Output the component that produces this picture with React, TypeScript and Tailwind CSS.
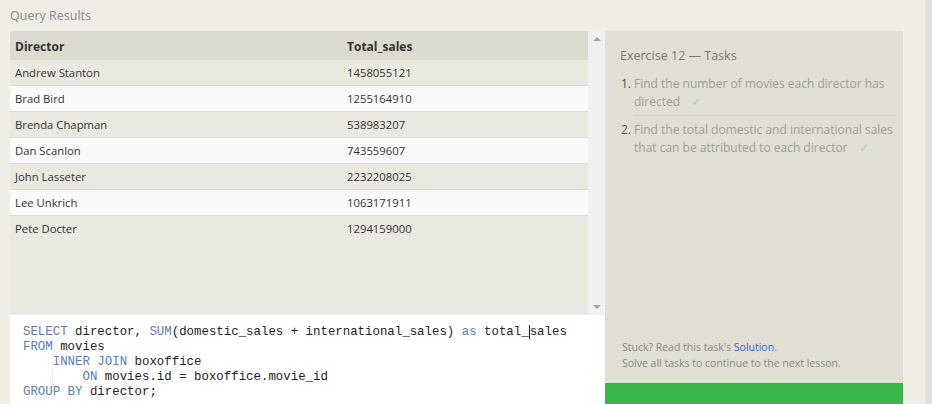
import React from "react";

const rows: [string, string][] = [
  ["Andrew Stanton", "1458055121"],
  ["Brad Bird", "1255164910"],
  ["Brenda Chapman", "538983207"],
  ["Dan Scanlon", "743559607"],
  ["John Lasseter", "2232208025"],
  ["Lee Unkrich", "1063171911"],
  ["Pete Docter", "1294159000"],
];

const K = ({ children }: { children: React.ReactNode }) => (
  <span className="text-[#5b7cb8]">{children}</span>
);

function Check() {
  return <span className="ml-[11px] text-[#a9d4a4]">✓</span>;
}

export default function App() {
  return (
    <div
      className="w-[932px] h-[404px] bg-[#efede6] flex overflow-hidden"
      style={{ fontFamily: '"Open Sans", "Noto Sans", sans-serif' }}
    >
      {/* left column */}
      <div className="w-[605px] pl-[10px] flex flex-col">
        <div className="h-[31px] pt-[6px] text-[12.5px] text-[#8a8a8a] leading-[20px]">Query Results</div>
        <div className="h-[284px] flex">
          <div className="w-[578px] bg-[#e9e8e1] flex flex-col">
            <div className="h-[29px] pt-[2px] bg-[#dcdbd0] flex items-center text-[12px] font-bold text-[#333]">
              <div className="w-[337px] pl-[5px]">Director</div>
              <div>Total_sales</div>
            </div>
            {rows.map(([d, s], i) => (
              <div
                key={d}
                className={`h-[26px] pt-[1px] flex items-center text-[11.3px] text-[#333] ${
                  i === rows.length - 1 ? "" : "border-b border-[#dddcd5]"
                } ${i % 2 === 1 ? "bg-[#fafafa]" : "bg-[#e9e8e1]"}`}
              >
                <div className="w-[337px] pl-[5px]">{d}</div>
                <div>{s}</div>
              </div>
            ))}
          </div>
          <div className="w-[17px] bg-[#f0f0f0] flex flex-col justify-between items-center py-[6px]">
            <div className="w-0 h-0 border-l-[4px] border-r-[4px] border-b-[4px] border-l-transparent border-r-transparent border-b-[#a3a3a3]" />
            <div className="w-0 h-0 border-l-[4px] border-r-[4px] border-t-[4px] border-l-transparent border-r-transparent border-t-[#a3a3a3]" />
          </div>
        </div>
        <div
          className="flex-1 bg-white pl-[13px] pt-[10px] text-[12.4px] leading-[15px] text-[#222] whitespace-pre"
          style={{ fontFamily: '"Liberation Mono", "DejaVu Sans Mono", monospace' }}
        >
          <div>
            <K>SELECT</K> director, <K>SUM</K>(domestic_sales + international_sales) <K>as</K> total_
            <span className="border-l border-[#222]">sales</span>
          </div>
          <div>
            <K>FROM</K> movies
          </div>
          <div>
            {"    "}
            <K>INNER JOIN</K> boxoffice
          </div>
          <div className="relative">
            <span className="absolute left-[29px] top-0 h-[15px] border-l border-dotted border-[#d8d8d8]" />
            {"        "}
            <K>ON</K> movies.id = boxoffice.movie_id
          </div>
          <div>
            <K>GROUP BY</K> director;
          </div>
        </div>
      </div>

      {/* right panel */}
      <div className="w-[298px] mt-[31px] bg-[#e1dfd4] flex flex-col">
        <div className="flex-1 flex flex-col pl-[15px] pr-[4px]">
          <div className="pt-[16px] text-[12.5px] text-[#777]">Exercise 12 — Tasks</div>
          <div className="mt-[9px] text-[12px] leading-[18px]">
            <div className="flex">
              <span className="w-[14px] shrink-0 pl-[1px] text-[#555]">1.</span>
              <div className="flex-1 pb-[4px] border-b border-[#d3d1c6] text-[#a09e99] mr-[3px]">
                Find the number of movies each director has directed
                <Check />
              </div>
            </div>
            <div className="flex pt-[5px]">
              <span className="w-[14px] shrink-0 pl-[1px] text-[#555]">2.</span>
              <div className="flex-1 text-[#a09e99]">
                Find the total domestic and international sales that can be attributed to each director
                <Check />
              </div>
            </div>
          </div>
          <div className="mt-auto pb-[12px] pl-[2px] text-[10.5px] leading-[16px] text-[#888]">
            <div>
              Stuck? Read this task's <span className="text-[#2e66d6]">Solution</span>.
            </div>
            <div>Solve all tasks to continue to the next lesson.</div>
          </div>
        </div>
        <div className="h-[21px] bg-[#3ab54a]" />
      </div>

      <div className="w-[22px]" />
      <div className="w-[7px] bg-[#e2dedb]" />
    </div>
  );
}
